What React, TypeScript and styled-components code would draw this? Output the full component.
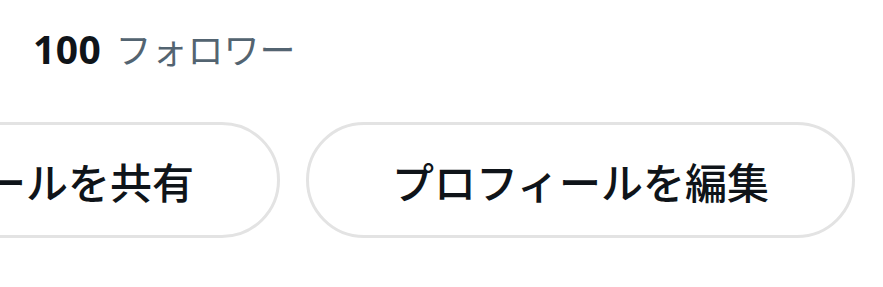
import React from 'react';
import styled, { createGlobalStyle } from 'styled-components';

const GlobalStyle = createGlobalStyle`
  html, body {
    margin: 0;
    padding: 0;
    background: #ffffff;
  }
  body {
    font-family: "Noto Sans", "Noto Sans CJK JP", sans-serif;
    color: #0f1419;
  }
`;

const Page = styled.div`
  width: 883px;
  height: 287px;
  overflow: hidden;
  background: #ffffff;
`;

const Stats = styled.div`
  display: flex;
  align-items: baseline;
  gap: 14px;
  padding: 25px 0 0 33px;
  height: 96px;
  box-sizing: border-box;
`;

const Count = styled.span`
  font-size: 39px;
  font-weight: 700;
  letter-spacing: 0.5px;
  line-height: 46px;
  color: #0f1419;
`;

const Label = styled.span`
  font-family: "Noto Sans CJK JP", sans-serif;
  font-size: 36px;
  font-weight: 400;
  line-height: 46px;
  color: #536471;
`;

const Actions = styled.div`
  display: flex;
  justify-content: flex-end;
  gap: 26px;
  padding: 26px 28px 0 0;
`;

const PillButton = styled.button`
  flex: 0 0 549px;
  height: 116px;
  box-sizing: border-box;
  border: 3px solid #e3e3e3;
  border-radius: 58px;
  background: #ffffff;
  font-family: "Noto Sans CJK JP", sans-serif;
  font-size: 42px;
  font-weight: 500;
  color: #0f1419;
  white-space: nowrap;
  padding: 0;
  cursor: pointer;
`;

const App: React.FC = () => {
  return (
    <Page>
      <GlobalStyle />
      <Stats>
        <Count>100</Count>
        <Label>フォロワー</Label>
      </Stats>
      <Actions>
        <PillButton>プロフィールを共有</PillButton>
        <PillButton>プロフィールを編集</PillButton>
      </Actions>
    </Page>
  );
};

export default App;
